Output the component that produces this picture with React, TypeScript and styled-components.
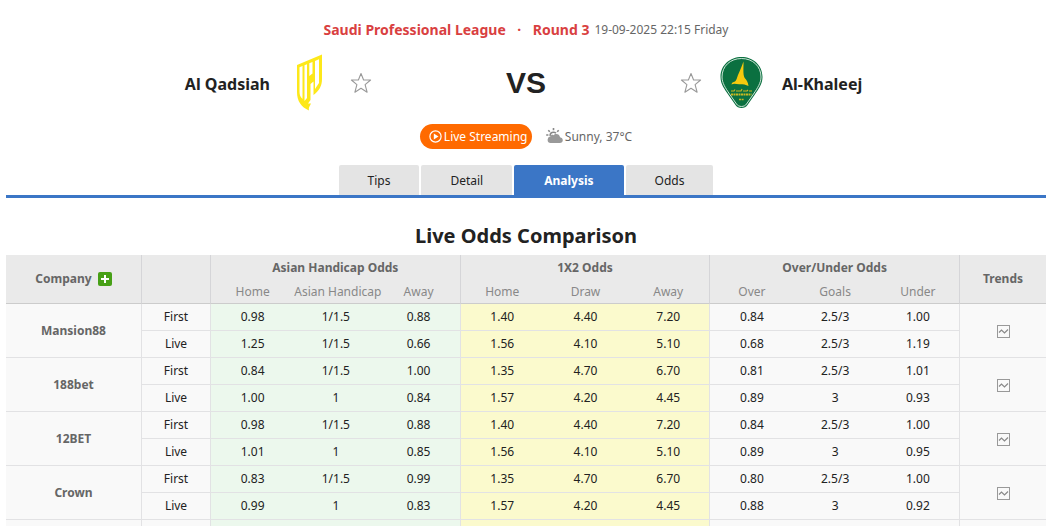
import React from "react";
import styled, { createGlobalStyle, css } from "styled-components";

const GlobalStyle = createGlobalStyle`
  * { box-sizing: border-box; }
  body {
    margin: 0;
    background: #fff;
    color: #222;
    font-family: Tahoma, "Noto Sans", "DejaVu Sans Condensed", sans-serif;
    font-size: 12px;
    line-height: 18px;
  }
`;

const Page = styled.div`
  padding: 20px 7px 0 6px;
`;

const MatchInfo = styled.p`
  margin: 0;
  display: flex;
  justify-content: center;
  align-items: center;
  line-height: 20px;
  color: #666;
`;

const League = styled.a`
  color: #d93f41;
  font-size: 14px;
  font-weight: bold;
  text-decoration: none;
`;

const Dot = styled.span`
  width: 27px;
  text-align: center;
  color: #d93f41;
  font-size: 14px;
  font-weight: bold;
`;

const Round = styled.strong`
  margin-right: 5px;
  color: #d93f41;
  font-size: 14px;
`;

const Teams = styled.div`
  display: grid;
  grid-template-columns: 1fr 308px 1fr;
  align-items: center;
  height: 60px;
  margin-top: 13px;
`;

const Team = styled.div<{ $away?: boolean }>`
  display: flex;
  align-items: center;
  flex-direction: ${(p) => (p.$away ? "row-reverse" : "row")};
  justify-content: flex-end;
  gap: 18px;
`;

const TeamName = styled.a`
  padding-top: 2px;
  color: #222;
  font-size: 16px;
  font-weight: bold;
  line-height: 24px;
  text-decoration: none;
`;

const StarButton = styled.button`
  display: flex;
  padding: 0;
  border: 0;
  background: none;
  cursor: pointer;
`;

const Versus = styled.div`
  text-align: center;
  font: bold 30px/36px "Liberation Sans", Arial, sans-serif;
`;

const Extras = styled.div`
  display: flex;
  justify-content: center;
  align-items: center;
  gap: 14px;
  margin-top: 11px;
`;

const StreamButton = styled.button`
  display: flex;
  align-items: center;
  gap: 2px;
  width: 112px;
  height: 25px;
  padding: 0 0 0 9px;
  border: 0;
  border-radius: 13px;
  background: #ff6a00;
  color: #fff;
  font: inherit;
  white-space: nowrap;
  cursor: pointer;
`;

const Weather = styled.span`
  display: flex;
  align-items: center;
  gap: 2px;
  color: #666;
`;

const Tabs = styled.nav`
  display: flex;
  justify-content: center;
  gap: 2px;
  margin-top: 16px;
  border-bottom: 3px solid #3b76c6;
`;

const Tab = styled.a<{ $active?: boolean }>`
  height: 30px;
  padding: 0 29px;
  border-radius: 2px 2px 0 0;
  background: #e4e4e4;
  color: #222;
  line-height: 31px;
  text-decoration: none;
  ${(p) =>
    p.$active &&
    css`
      padding: 0 30px;
      background: #3b76c6;
      color: #fff;
      font-weight: bold;
    `}
`;

const Title = styled.h2`
  margin: 22px 0 4px;
  font-size: 20px;
  line-height: 31px;
  text-align: center;
`;

const OddsTable = styled.table`
  width: 100%;
  table-layout: fixed;
  border-collapse: separate;
  border-spacing: 0;
  text-align: center;
`;

const Col = styled.col<{ $width?: number }>`
  width: ${(p) => (p.$width ? `${p.$width}px` : "auto")};
`;

const HeadCell = styled.th<{ $last?: boolean; $group?: boolean }>`
  height: ${(p) => (p.$group ? "25px" : "49px")};
  padding: 0;
  background: #eaeaea;
  color: #666;
  border-right: ${(p) => (p.$last ? "0" : "1px solid #d5d5d8")};
  border-bottom: ${(p) => (p.$group ? "0" : "1px solid #ccc")};
`;

const SubHead = styled.th<{ $edge: boolean }>`
  height: 24px;
  padding: 0;
  background: #eaeaea;
  color: #888;
  font-weight: normal;
  white-space: nowrap;
  border-right: ${(p) => (p.$edge ? "1px solid #d5d5d8" : "0")};
  border-bottom: 1px solid #ccc;
`;

const CompanyHead = styled.span`
  display: flex;
  align-items: center;
  justify-content: center;
  gap: 6px;
`;

const AddButton = styled.button`
  display: flex;
  padding: 0;
  border: 0;
  background: none;
  cursor: pointer;
`;

const tones = { plain: "#f9f9f9", green: "#ecf8ed", yellow: "#fbfacd" };
type Tone = keyof typeof tones;

const Cell = styled.td<{ $tone?: Tone; $edge?: boolean }>`
  height: 27px;
  padding: 0;
  background: ${(p) => tones[p.$tone ?? "plain"]};
  border-right: ${(p) => (p.$edge ? "1px solid #e2e2e4" : "0")};
  border-bottom: 1px solid #e2e2e4;
`;

const Company = styled.th`
  padding: 0;
  background: #f9f9f9;
  color: #666;
  border-right: 1px solid #e2e2e4;
  border-bottom: 1px solid #e2e2e4;
`;

const Spacer = styled(Cell)`
  height: 8px;
  border-bottom: 0;
`;

const TrendButton = styled.button`
  display: inline-flex;
  padding: 0;
  border: 0;
  background: none;
  vertical-align: middle;
  cursor: pointer;
`;

const Star = () => (
  <StarButton aria-label="Follow team">
    <svg width="22" height="22" viewBox="0 0 22 22" fill="none" stroke="#999" strokeWidth="1.1">
      <path d="M11 1.5 13.6 8h7l-5.5 4.700 2 7.500-6.100-4-6.100 4 2-7.500L1.400 8h7z" strokeLinejoin="round" />
    </svg>
  </StarButton>
);

const QadsiahCrest = () => (
  <svg width="44" height="58" viewBox="0 0 44 58" aria-hidden="true">
    <path
      fill="#fde81a"
      fillRule="evenodd"
      d="M9 11 34 .5V25C34 32 31 37 25.500 41V27.500L22.500 30V46L20 49.500h3l-1 2c-1 1.500-1.500 3-1 5C13 53 9 47 9 38ZM11.500 13.200V38c0 3 1 5 3 7V12ZM16.500 11.200V47l2.500-3V10.200ZM21.300 9.200V22l3.200-2.500V7.900ZM27 6.900V35l4-6V5.200Z"
    />
  </svg>
);

const KhaleejCrest = () => (
  <svg width="44" height="54" viewBox="0 0 44 54" aria-hidden="true">
    <path d="M21.500 1C10 1 .5 9 .5 21c0 7 4 12 8 18l7 10c2 4 10 4 12 0l7-10c4-6 8-11 8-18C42.500 9 33 1 21.500 1z" fill="#0b7040" />
    <path d="M21.500 2.500C10.500 2.500 2 10 2 21c0 6 3.500 11 7.500 17l7 10c2 3.300 8 3.300 10 0l7-10c4-6 7.500-11 7.500-17C41 10 32.500 2.500 21.500 2.500z" fill="none" stroke="#e2f0e6" strokeWidth=".9" />
    <path d="M23.500 5.500c-1 3-3 8-5.500 13.500-.8 2-1 4-2.500 6-1.500 1.200-3.500 1-4 3.500 3-1.500 5 0 8.500-.3 3 0 6 .3 8.500 1.800-.5-4-2-6-3.800-8-2-4-1-10-1.200-16.500z" fill="#f6c90e" />
    <path d="M11 35h3l1-1.500m1 1.500h5l1-2m1 2h4l1-1m1 1h3" fill="none" stroke="#c9b823" strokeWidth="1.200" />
    <path d="M11 38.500h20.500" stroke="#c9b823" strokeWidth="2" strokeDasharray="2 .5" />
    <path d="M19 43.500h5" stroke="#c9b823" strokeWidth="1.500" strokeDasharray="2 .6" />
  </svg>
);

const PlayIcon = () => (
  <svg width="13" height="13" viewBox="0 0 13 13" aria-hidden="true">
    <circle cx="6.500" cy="6.500" r="5.600" fill="none" stroke="#fff" strokeWidth="1.200" />
    <path d="M4.800 3.600v5.800l4.700-2.900z" fill="#fff" />
  </svg>
);

const WeatherIcon = () => (
  <svg width="17" height="18" viewBox="0 0 17 18" aria-hidden="true">
    <g stroke="#888" strokeWidth="1.600" fill="none">
      <path d="M7.500 0v2.200M2.300 2.200l1.500 1.500M12.700 2.200l-1.500 1.500M.2 7h2.200" />
      <path d="M4.200 8c-.4-2.500 1.300-3.800 3.300-3.800 1 0 1.800.3 2.500 1" />
    </g>
    <path d="M4.500 15a3.300 3.300 0 0 1-.3-6.500C5 6.500 6.500 6.500 7.500 7.200 9 5 13.800 5.500 14 9.300c4 .7 3.500 5.700-.3 5.700z" fill="#999" />
  </svg>
);

const PlusIcon = () => (
  <svg width="14" height="14" viewBox="0 0 14 14" aria-hidden="true">
    <rect width="14" height="14" rx="2" fill="#47a016" />
    <path d="M7 3v8M3 7h8" stroke="#fff" strokeWidth="2" />
  </svg>
);

const TrendIcon = () => (
  <svg width="13" height="13" viewBox="0 0 13 13" fill="none" aria-hidden="true">
    <rect x=".5" y=".5" width="12" height="12" stroke="#999" />
    <path d="M2 7.500l2.500-2.500 3 3L11 4.500" stroke="#888" strokeWidth="1.200" />
  </svg>
);

const groups: { name: string; columns: string[]; tone: Tone }[] = [
  { name: "Asian Handicap Odds", columns: ["Home", "Asian Handicap", "Away"], tone: "green" },
  { name: "1X2 Odds", columns: ["Home", "Draw", "Away"], tone: "yellow" },
  { name: "Over/Under Odds", columns: ["Over", "Goals", "Under"], tone: "plain" },
];

const companies = [
  {
    name: "Mansion88",
    first: ["0.98", "1/1.5", "0.88", "1.40", "4.40", "7.20", "0.84", "2.5/3", "1.00"],
    live: ["1.25", "1/1.5", "0.66", "1.56", "4.10", "5.10", "0.68", "2.5/3", "1.19"],
  },
  {
    name: "188bet",
    first: ["0.84", "1/1.5", "1.00", "1.35", "4.70", "6.70", "0.81", "2.5/3", "1.01"],
    live: ["1.00", "1", "0.84", "1.57", "4.20", "4.45", "0.89", "3", "0.93"],
  },
  {
    name: "12BET",
    first: ["0.98", "1/1.5", "0.88", "1.40", "4.40", "7.20", "0.84", "2.5/3", "1.00"],
    live: ["1.01", "1", "0.85", "1.56", "4.10", "5.10", "0.89", "3", "0.95"],
  },
  {
    name: "Crown",
    first: ["0.83", "1/1.5", "0.99", "1.35", "4.70", "6.70", "0.80", "2.5/3", "1.00"],
    live: ["0.99", "1", "0.83", "1.57", "4.20", "4.45", "0.88", "3", "0.92"],
  },
];

const OddsCells = ({ values }: { values: string[] }) => (
  <>
    {values.map((value, i) => (
      <Cell key={i} $tone={groups[Math.floor(i / 3)].tone} $edge={i % 3 === 2}>
        {value}
      </Cell>
    ))}
  </>
);

export default function App() {
  return (
    <>
      <GlobalStyle />
      <Page>
        <header>
          <MatchInfo>
            <League href="#league">Saudi Professional League</League>
            <Dot>·</Dot>
            <Round>Round 3</Round>
            <time>19-09-2025 22:15 Friday</time>
          </MatchInfo>
          <Teams>
            <Team>
              <TeamName href="#home">Al Qadsiah</TeamName>
              <QadsiahCrest />
              <Star />
            </Team>
            <Versus>VS</Versus>
            <Team $away>
              <TeamName href="#away">Al-Khaleej</TeamName>
              <KhaleejCrest />
              <Star />
            </Team>
          </Teams>
          <Extras>
            <StreamButton>
              <PlayIcon />
              Live Streaming
            </StreamButton>
            <Weather>
              <WeatherIcon />
              Sunny, 37°C
            </Weather>
          </Extras>
        </header>
        <Tabs>
          <Tab href="#tips">Tips</Tab>
          <Tab href="#detail">Detail</Tab>
          <Tab href="#analysis" $active>
            Analysis
          </Tab>
          <Tab href="#odds">Odds</Tab>
        </Tabs>
        <main>
          <Title>Live Odds Comparison</Title>
          <OddsTable>
            <colgroup>
              <Col $width={136} />
              <Col $width={69} />
              <Col span={9} />
              <Col $width={86} />
            </colgroup>
            <thead>
              <tr>
                <HeadCell rowSpan={2}>
                  <CompanyHead>
                    Company
                    <AddButton aria-label="Add company">
                      <PlusIcon />
                    </AddButton>
                  </CompanyHead>
                </HeadCell>
                <HeadCell rowSpan={2} />
                {groups.map((g) => (
                  <HeadCell key={g.name} colSpan={3} $group>
                    {g.name}
                  </HeadCell>
                ))}
                <HeadCell rowSpan={2} $last>
                  Trends
                </HeadCell>
              </tr>
              <tr>
                {groups.map((g) =>
                  g.columns.map((c, i) => (
                    <SubHead key={g.name + c} $edge={i === 2}>
                      {c}
                    </SubHead>
                  )),
                )}
              </tr>
            </thead>
            {companies.map((c) => (
              <tbody key={c.name}>
                <tr>
                  <Company rowSpan={2} scope="rowgroup">
                    {c.name}
                  </Company>
                  <Cell $edge>First</Cell>
                  <OddsCells values={c.first} />
                  <Cell rowSpan={2}>
                    <TrendButton aria-label={`${c.name} trends`}>
                      <TrendIcon />
                    </TrendButton>
                  </Cell>
                </tr>
                <tr>
                  <Cell $edge>Live</Cell>
                  <OddsCells values={c.live} />
                </tr>
              </tbody>
            ))}
            <tfoot>
              <tr>
                <Spacer $edge />
                <Spacer $edge />
                {groups.map((g) => (
                  <Spacer key={g.name} colSpan={3} $tone={g.tone} $edge />
                ))}
                <Spacer />
              </tr>
            </tfoot>
          </OddsTable>
        </main>
      </Page>
    </>
  );
}
